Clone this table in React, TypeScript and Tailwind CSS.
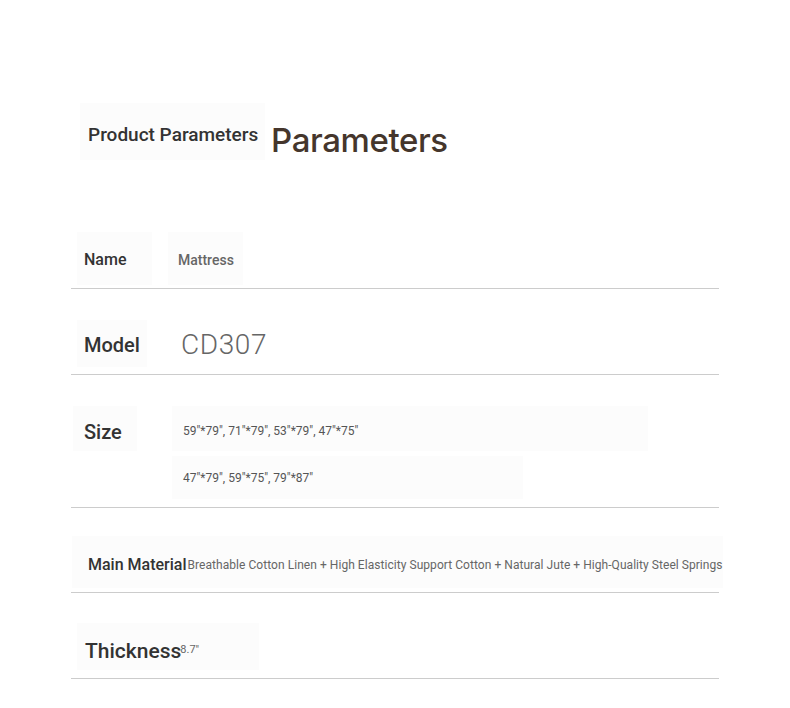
const font = "font-['Roboto',sans-serif]";

const Row = ({ children, className }: { children: React.ReactNode; className?: string }) => (
  <div className={`flex border-b border-[#cccccc] ${className ?? ""}`}>{children}</div>
);

export default function App() {
  return (
    <div className={`min-h-[708px] w-[790px] bg-white ${font}`}>
      <div className="ml-[71px] w-[648px] pt-[103px]">
        {/* heading */}
        <div className="flex items-center pl-[9px]">
          <div className="flex h-[57px] w-[185px] items-center bg-[#fcfcfc] pl-[8px] pt-[7px] text-[19px] font-medium text-[#333333]">
            Product Parameters
          </div>
          <div className="ml-[6px] mt-[17px] font-['Inter',sans-serif] text-[33px] font-medium leading-none tracking-[-0.4px] text-[#45362c]">
            Parameters
          </div>
        </div>

        {/* name */}
        <Row className="mt-[66px] h-[63px] items-end pb-[3px]">
          <div className="ml-[6px] flex h-[53px] w-[75px] items-center bg-[#fcfcfc] pl-[7px] pt-[3px] text-[16px] font-medium text-[#333333]">
            Name
          </div>
          <div className="ml-[16px] flex h-[53px] w-[75px] items-center bg-[#fcfcfc] pl-[10px] pt-[3px] text-[14px] font-medium text-[#666666]">
            Mattress
          </div>
        </Row>

        {/* model */}
        <Row className="h-[86px] items-end pb-[7px]">
          <div className="ml-[6px] flex h-[47px] w-[70px] items-center bg-[#fcfcfc] pl-[7px] pt-[2px] text-[20px] font-medium text-[#333333]">
            Model
          </div>
          <div className="ml-[34px] flex h-[47px] items-center pt-[3px] text-[28px] font-light tracking-[0.6px] text-[#666666]">
            CD307
          </div>
        </Row>

        {/* size */}
        <Row className="h-[133px] pt-[31px]">
          <div className="ml-[2px] flex h-[45px] w-[64px] items-center bg-[#fcfcfc] pl-[11px] pt-[7px] text-[20px] font-medium text-[#333333]">
            Size
          </div>
          <div className="ml-[35px] flex flex-col gap-[5px]">
            <div className="flex h-[45px] w-[476px] items-center bg-[#fcfcfc] pl-[11px] pt-[5px] text-[12px] text-[#555555]">
              59"*79", 71"*79", 53"*79", 47"*75"
            </div>
            <div className="flex h-[43px] w-[351px] items-center bg-[#fcfcfc] pl-[11px] text-[12px] text-[#555555]">
              47"*79", 59"*75", 79"*87"
            </div>
          </div>
        </Row>

        {/* material */}
        <Row className="h-[85px] items-end pb-[4px]">
          <div className="ml-[1px] flex h-[52px] items-center whitespace-nowrap bg-[#fcfcfc] pl-[16px] pt-[6px] text-[16px] font-medium text-[#333333]">
            Main Material
            <span className="ml-[1px] text-[12px] font-normal tracking-[0.05px] text-[#666666]">
              Breathable Cotton Linen + High Elasticity Support Cotton + Natural Jute + High-Quality Steel Springs
            </span>
          </div>
        </Row>

        {/* thickness */}
        <Row className="h-[86px] items-end pb-[8px]">
          <div className="ml-[6px] flex h-[47px] w-[182px] items-center bg-[#fcfcfc] pl-[8px] pt-[10px] text-[21px] font-medium text-[#333333]">
            Thickness
            <span className="-mt-[2px] -ml-[1px] text-[11px] font-normal text-[#666666]">8.7"</span>
          </div>
        </Row>
      </div>
    </div>
  );
}
